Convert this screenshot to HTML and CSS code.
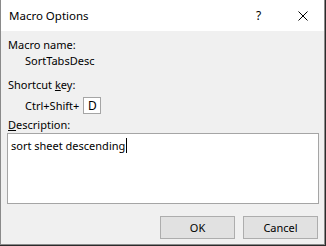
FILE: index.html
```html
<!DOCTYPE html>
<html lang="en">
<head>
    <meta charset="UTF-8">
    <title>Macro Options</title>
    <link rel="stylesheet" href="styles.css">
</head>
<body>
    <div class="dialog">
        <div class="titlebar">
            <span class="title">Macro Options</span>
            <span class="help">?</span>
            <svg class="close" width="10" height="10" viewBox="0 0 10 10">
                <path d="M0.5 0.5 L9.5 9.5 M9.5 0.5 L0.5 9.5" stroke="#000" stroke-width="1" fill="none"/>
            </svg>
        </div>
        <div class="content">
            <div class="label">Macro name:</div>
            <div class="value">SortTabsDesc</div>
            <div class="label gap">Shortcut <u>k</u>ey:</div>
            <div class="shortcut">
                <span>Ctrl+Shift+</span>
                <span class="keybox">D</span>
            </div>
            <div class="label desc-label"><u>D</u>escription:</div>
            <div class="textbox"><span class="caret">sort sheet descending</span></div>
            <div class="button-group">
                <button>OK</button>
                <button>Cancel</button>
            </div>
        </div>
    </div>
</body>
</html>
```

FILE: styles.css
```css
body {
    margin: 0;
    background: #2b2b2b;
    font-family: "Noto Sans", "Open Sans", sans-serif;
    font-size: 11px;
    color: #000;
}
.dialog {
    box-sizing: border-box;
    width: 325px;
    height: 245px;
    background: #f0f0f0;
    border: 1px solid #8a8a8a;
    border-top: none;
}
.titlebar {
    height: 31px;
    background: #fff;
    display: flex;
    align-items: center;
    padding-left: 8px;
}
.title {
    flex: 1;
    font-size: 11.5px;
    line-height: 16px;
    padding-top: 1px;
}
.help {
    width: 42px;
    font-size: 12px;
    line-height: 16px;
    padding-top: 1px;
}
.close {
    margin-right: 16px;
}
.content {
    padding: 6px 5px 0 6px;
}
.label, .value {
    line-height: 16px;
    padding-left: 1px;
}
.value {
    padding-left: 18px;
}
.gap {
    margin-top: 8px;
}
.shortcut {
    display: flex;
    align-items: center;
    height: 17px;
    margin-top: 4px;
    padding-left: 18px;
}
.keybox {
    box-sizing: border-box;
    width: 18px;
    height: 17px;
    margin-left: 4px;
    background: #fff;
    border: 1px solid #a5a5a5;
    text-align: center;
    line-height: 15px;
    font-size: 12px;
}
.desc-label {
    margin-top: 3px;
}
.textbox {
    box-sizing: border-box;
    width: 312px;
    height: 71px;
    background: #fff;
    border: 1px solid #a5a5a5;
    padding: 4px 3px;
    line-height: 16px;
}
.caret {
    border-right: 1px solid #000;
    padding-right: 1px;
}
.button-group {
    display: flex;
    justify-content: flex-end;
    gap: 8px;
    margin-top: 12px;
    padding-right: 1px;
}
button {
    box-sizing: border-box;
    width: 75px;
    height: 23px;
    background: #e1e1e1;
    border: 1px solid #adadad;
    font-family: inherit;
    font-size: 11px;
    color: #000;
    padding: 0;
}
```
